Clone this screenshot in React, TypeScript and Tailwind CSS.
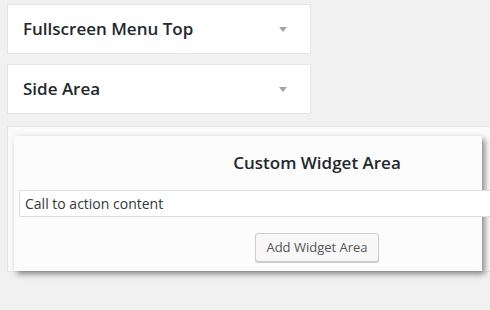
import React from "react";

function Arrow() {
  return (
    <span className="block w-0 h-0 border-l-[4px] border-r-[4px] border-t-[5px] border-l-transparent border-r-transparent border-t-[#a0a5aa]" />
  );
}

function SectionBox({ title }: { title: string }) {
  return (
    <div className="w-[304px] h-[50px] bg-white border border-[#e5e5e5] flex items-center justify-between pl-[15px] pr-[23px]">
      <span className="text-[17px] font-semibold text-[#23282d]">{title}</span>
      <Arrow />
    </div>
  );
}

export default function App() {
  return (
    <div
      className="w-[490px] h-[310px] overflow-hidden bg-[#f1f1f1] pt-[4px] pl-[7px]"
      style={{ fontFamily: '"Open Sans", "Noto Sans", sans-serif' }}
    >
      <SectionBox title="Fullscreen Menu Top" />
      <div className="mt-[10px]">
        <SectionBox title="Side Area" />
      </div>

      {/* sidebar holder with the custom widget area form over it */}
      <div className="mt-[12px] w-[520px] h-[146px] border border-[#e5e5e5] bg-[#fafafa] pl-[6px] pt-[9px]">
        <div className="w-[468px] h-[135px] bg-[#fcfcfc] shadow-[3px_3px_6px_rgba(0,0,0,0.45)]">
          <div className="w-[596px] ml-[5px] flex flex-col items-center">
            <div className="h-[54px] flex items-center text-[17px] font-semibold text-[#23282d]">
              Custom Widget Area
            </div>
            <input
              readOnly
              value="Call to action content"
              className="w-full h-[27px] border border-[#dddddd] bg-white px-[5px] text-[14px] text-[#32373c] outline-none"
            />
            <button className="mt-[16px] w-[124px] h-[29px] bg-[#f7f7f7] border border-[#cccccc] rounded-[3px] shadow-[0_1px_0_#cccccc] text-[13px] text-[#555555]">
              Add Widget Area
            </button>
          </div>
        </div>
      </div>
    </div>
  );
}
